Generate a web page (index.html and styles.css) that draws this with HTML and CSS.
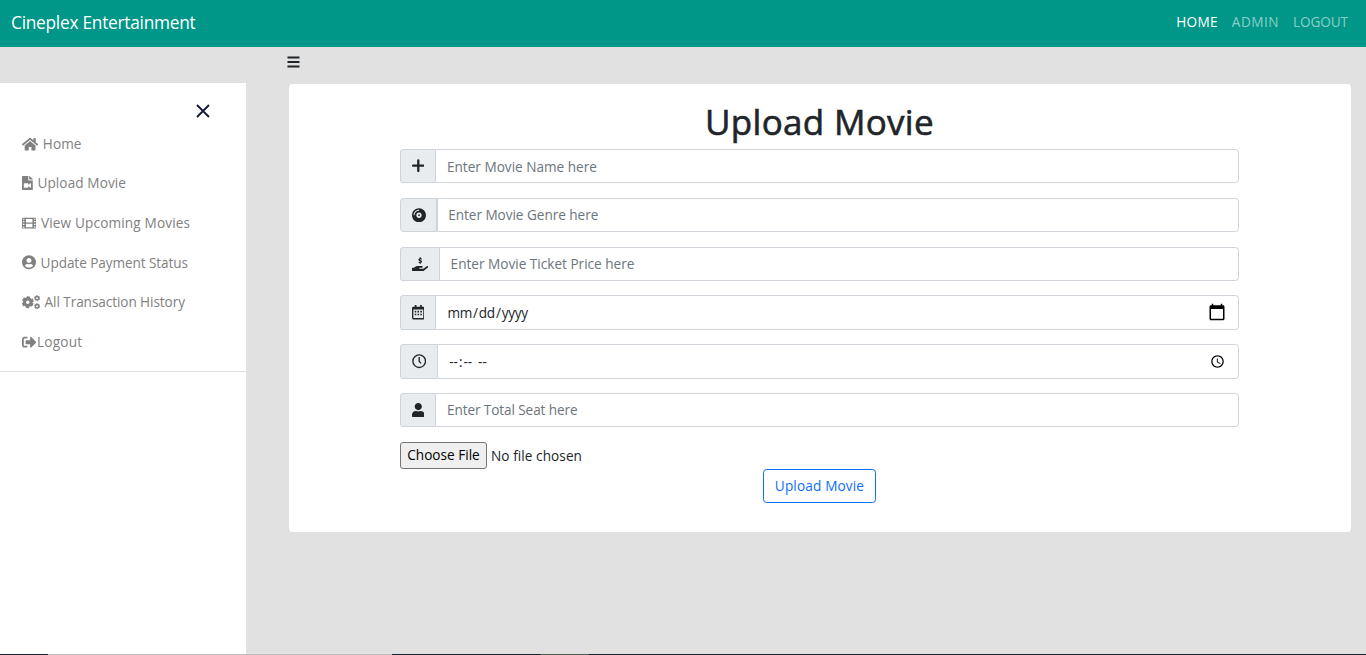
FILE: index.html
```html
<!DOCTYPE html>
<html lang="en">
<head>
<meta charset="utf-8">
<title>Cineplex Entertainment</title>
<link rel="stylesheet" href="styles.css">
</head>
<body>
<nav class="navbar">
  <a class="brand">Cineplex Entertainment</a>
  <div class="nav-links"><a class="active">HOME</a><a class="admin">ADMIN</a><a class="out">LOGOUT</a></div>
</nav>
<div class="layout">
  <aside class="sidebar">
    <div class="close"><svg width="14" height="14" viewBox="0 0 14 14"><path d="M1 1l12 12M13 1L1 13" stroke="#161b35" stroke-width="1.9"/></svg></div>
    <a class="item"><svg width="16.2" height="14.4" viewBox="0 0 576 512"><path d="M280.37 148.26L96 300.11V464a16 16 0 0 0 16 16l112.06-.29a16 16 0 0 0 15.92-16V368a16 16 0 0 1 16-16h64a16 16 0 0 1 16 16v95.64a16 16 0 0 0 16 16.05L464 480a16 16 0 0 0 16-16V300L295.67 148.26a12.19 12.19 0 0 0-15.3 0zM571.6 251.47L488 182.56V44.05a12 12 0 0 0-12-12h-56a12 12 0 0 0-12 12v72.61L318.47 43a48 48 0 0 0-61 0L4.34 251.47a12 12 0 0 0-1.6 16.9l25.5 31A12 12 0 0 0 45.15 301l235.22-193.74a12.19 12.19 0 0 1 15.3 0L530.9 301a12 12 0 0 0 16.9-1.6l25.5-31a12 12 0 0 0-1.7-16.93z"/></svg><span>Home</span></a>
    <a class="item up"><svg width="10.8" height="14.4" viewBox="0 0 384 512"><path d="M384 121.941V128H256V0h6.059c6.365 0 12.47 2.529 16.971 7.029l97.941 97.941A24.005 24.005 0 0 1 384 121.941zM224 136V0H24C10.745 0 0 10.745 0 24v464c0 13.255 10.745 24 24 24h336c13.255 0 24-10.745 24-24V160H248c-13.2 0-24-10.8-24-24zm96 144.016v111.963c0 21.445-25.943 31.998-40.971 16.971L224 353.941V392c0 13.255-10.745 24-24 24H88c-13.255 0-24-10.745-24-24V280c0-13.255 10.745-24 24-24h112c13.255 0 24 10.745 24 24v38.059l55.029-55.013c15.011-15.01 40.971-4.491 40.971 16.97z"/></svg><span>Upload Movie</span></a>
    <a class="item wide"><svg width="14.4" height="14.4" viewBox="0 0 512 512"><path fill-rule="evenodd" d="M24 64h464q24 0 24 24v336q0 24-24 24H24q-24 0-24-24V88q0-24 24-24zM32 96v36h52V96zM32 182v40h52v-40zM32 280v40h52v-40zM32 376v38h52v-38zM428 96v36h52V96zM428 182v40h52v-40zM428 280v40h52v-40zM428 376v38h52v-38zM140 106v126h232V106zM140 278v126h232V278z"/></svg><span>View Upcoming Movies</span></a>
    <a class="item narrow"><svg width="14" height="14.4" viewBox="0 0 496 512"><path d="M248 8C111 8 0 119 0 256s111 248 248 248 248-111 248-248S385 8 248 8zm0 96c48.6 0 88 39.4 88 88s-39.4 88-88 88-88-39.4-88-88 39.4-88 88-88zm0 344c-58.7 0-111.3-26.6-146.5-68.2 18.8-35.4 55.6-59.8 98.5-59.8 2.4 0 4.8.4 7.1 1.1 13 4.2 26.6 6.9 40.9 6.9 14.3 0 28-2.7 40.9-6.9 2.3-.7 4.7-1.1 7.1-1.1 42.9 0 79.7 24.4 98.5 59.8C359.3 421.4 306.7 448 248 448z"/></svg><span>Update Payment Status</span></a>
    <a class="item narrow"><svg width="18" height="14.4" viewBox="0 0 640 512"><g fill="none" stroke="#818181"><circle cx="205" cy="256" r="118" stroke-width="112"/><circle cx="205" cy="256" r="183" stroke-width="60" stroke-dasharray="118 73.64" stroke-dashoffset="-37"/><circle cx="536" cy="112" r="60" stroke-width="54"/><circle cx="536" cy="112" r="91" stroke-width="34" stroke-dasharray="58 37.29"/><circle cx="536" cy="400" r="60" stroke-width="54"/><circle cx="536" cy="400" r="91" stroke-width="34" stroke-dasharray="58 37.29"/></g></svg><span>All Transaction History</span></a>
    <a class="item tight"><svg width="14.4" height="14.4" viewBox="0 0 512 512"><path d="M497 273L329 441c-15 15-41 4.5-41-17v-96H152c-13.3 0-24-10.7-24-24v-96c0-13.3 10.7-24 24-24h136V88c0-21.4 25.9-32 41-17l168 168c9.3 9.4 9.3 24.6 0 34zM192 436v-40c0-6.6-5.4-12-12-12H96c-17.7 0-32-14.3-32-32V160c0-17.7 14.3-32 32-32h84c6.6 0 12-5.4 12-12V76c0-6.6-5.4-12-12-12H96c-53 0-96 43-96 96v192c0 53 43 96 96 96h84c6.6 0 12-5.4 12-12z"/></svg><span>Logout</span></a>
    <div class="divider"></div>
  </aside>
  <main class="main">
    <div class="toggle"><svg width="13" height="12" viewBox="0 0 13 12"><path d="M.5 1.500h12M.5 6h12M.5 10.500h12" stroke="#212529" stroke-width="1.8"/></svg></div>
    <form class="card">
      <h1>Upload Movie</h1>
      <div class="group"><span class="addon"><svg width="12.6" height="14.4" viewBox="0 0 12.6 14.4"><path d="M6.3 1.400v10.600M1 6.700h10.600" stroke="#212529" stroke-width="2.3" stroke-linecap="round"/></svg></span><input type="text" placeholder="Enter Movie Name here"></div>
      <div class="group genre"><span class="addon double"><svg width="14" height="14.4" viewBox="0 0 496 512"><path d="M248 8C111 8 0 119 0 256s111 248 248 248 248-111 248-248S385 8 248 8zM88 256H56c0-105.900 86.100-192 192-192v32c-88.200 0-160 71.800-160 160zm160 96c-53 0-96-43-96-96s43-96 96-96 96 43 96 96-43 96-96 96zm0-128c-17.700 0-32 14.300-32 32s14.300 32 32 32 32-14.300 32-32-14.300-32-32-32z" fill-rule="evenodd"/></svg></span><input type="text" placeholder="Enter Movie Genre here"></div>
      <div class="group"><span class="addon"><svg width="16.2" height="14.4" viewBox="0 0 576 512"><path d="M565.300 328.100c-11.800-10.700-30.200-10-42.600 0L430.300 402c-11.300 9.100-25.400 14-40 14H272c-8.800 0-16-7.200-16-16s7.200-16 16-16h78.300c15.900 0 30.700-10.900 33.300-26.600 3.300-20-12.100-37.400-31.600-37.400H192c-27 0-53.100 9.300-74.100 26.300L71.400 384H16c-8.800 0-16 7.200-16 16v96c0 8.800 7.200 16 16 16h356.800c14.500 0 28.600-4.900 40-14L564 377c15.200-12.100 16.400-35.300 1.300-48.900z"/><path d="M345 76C322 62 250 54 250 94c0 40 88 24 88 68 0 38-72 34-98 14M292 12v44M292 196v42" fill="none" stroke="#212529" stroke-width="46"/></svg></span><input type="text" placeholder="Enter Movie Ticket Price here"></div>
      <div class="group"><span class="addon"><svg width="12.6" height="14.4" viewBox="0 0 448 512"><path fill-rule="evenodd" d="M400 64h-48V12q0-12-12-12h-40q-12 0-12 12v52H160V12q0-12-12-12h-40q-12 0-12 12v52H48Q0 64 0 112v352q0 48 48 48h352q48 0 48-48V112q0-48-48-48zM48 160h352v298q0 6-6 6H54q-6 0-6-6z"/><path d="M96 208h56v56H96zM196 208h56v56h-56zM296 208h56v56h-56zM96 312h56v56H96zM196 312h56v56h-56zM296 312h56v56h-56z"/></svg></span><input type="date"></div>
      <div class="group"><span class="addon"><svg width="14.4" height="14.4" viewBox="0 0 512 512"><g fill="none" stroke="#212529"><circle cx="256" cy="256" r="224" stroke-width="48"/><path d="M256 110v158l68 58" stroke-width="48"/></g></svg></span><input type="time"></div>
      <div class="group seat"><span class="addon"><svg width="12.6" height="14.4" viewBox="0 0 448 512"><path d="M224 256c70.700 0 128-57.300 128-128S294.700 0 224 0 96 57.300 96 128s57.300 128 128 128zm89.600 32h-16.700c-22.200 10.200-46.900 16-72.900 16s-50.600-5.800-72.900-16h-16.700C60.200 288 0 348.200 0 422.400V464c0 26.500 21.500 48 48 48h352c26.500 0 48-21.500 48-48v-41.600c0-74.200-60.200-134.400-134.400-134.400z"/></svg></span><input type="text" placeholder="Enter Total Seat here"></div>
      <input class="file" type="file">
      <button class="submit" type="button">Upload Movie</button>
    </form>
  </main>
</div>
<div class="edge"></div>
</body>
</html>
```
FILE: styles.css
```css
* { box-sizing: border-box; }
body { margin: 0; height: 655px; overflow: hidden; background: #e1e1e1; color: #212529; font: 13.6px/21.6px "Segoe UI", "Open Sans", sans-serif; }
.navbar { height: 47px; background: #009688; display: flex; justify-content: space-between; padding: 0 18px 0 11px; color: #fff; }
.brand { font-size: 17.3px; line-height: 46px; letter-spacing: -.25px; }
.nav-links { display: flex; gap: 14px; line-height: 44px; }
.nav-links a { color: rgba(255,255,255,.55); letter-spacing: -.1px; }
.nav-links .active { color: #fff; letter-spacing: .3px; }
.nav-links .admin { letter-spacing: .5px; }
.layout { display: flex; height: 608px; }
.sidebar { width: 246px; margin-top: 36px; background: #fff; flex: none; }
.close { height: 41px; padding: 20.5px 0 0 196px; line-height: 0; }
.item { display: flex; align-items: center; gap: 4.6px; height: 39.6px; padding-left: 22px; color: #818181; letter-spacing: .1px; }
.item svg { fill: #818181; flex: none; }
.item.up { padding-bottom: 1px; }
.item.wide { letter-spacing: .15px; }
.item.narrow { letter-spacing: -.08px; }
.item.tight { gap: .7px; letter-spacing: .2px; }
.divider { border-top: 1px solid #dedede; margin-top: 9px; }
.main { flex: 1; padding: 0 15px 0 43px; }
.toggle { height: 37px; padding: 9px 0 0; line-height: 0; margin-left: -2px; }
.card { height: 448px; background: #fff; border-radius: 3px; padding: 16px 112px 0 111px; display: flex; flex-direction: column; }
h1 { margin: 0 0 6px; height: 43px; text-align: center; font-weight: 500; font-size: 35px; line-height: 43px; letter-spacing: .3px; -webkit-text-stroke: .6px #212529; }
.group { display: flex; height: 34.4px; margin-bottom: 14.4px; flex: none; }
.addon { display: flex; align-items: center; padding: 0 10.8px; border: 1px solid #ced4da; border-right: 0; background: #e9ecef; border-radius: 3.6px 0 0 3.6px; }
.addon.double { border-right: 1px solid #ced4da; padding-right: 10px; }
.addon svg { fill: #212529; }
.group input { flex: 1; min-width: 0; border: 1px solid #ced4da; border-radius: 0 3.6px 3.6px 0; padding: 1px 10.8px 0; background: #fff; color: #212529; font: inherit; letter-spacing: 0; outline: 0; }
.group input::placeholder { color: #6c757d; opacity: 1; }
.group.genre input { letter-spacing: -.04px; padding: 0 10.4px; }
.group.seat input { letter-spacing: -.1px; padding-top: 0; }
.group input[type="date"] { letter-spacing: -.25px; padding-left: 10.2px; }
.group input[type="time"] { padding-left: 10.2px; }
input[type="time"]::-webkit-datetime-edit-minute-field { margin-right: 2px; }
input[type="time"]::-webkit-datetime-edit-hour-field,
input[type="time"]::-webkit-datetime-edit-minute-field,
input[type="time"]::-webkit-datetime-edit-ampm-field { letter-spacing: 1px; }
input[type="date"]::-webkit-calendar-picker-indicator { width: 18px; height: 18px; padding: 0; background-size: 18px 18px; margin-right: 1px; margin-top: -2px; }
input[type="time"]::-webkit-calendar-picker-indicator { width: 15px; height: 15px; padding: 0; background-size: 15px 15px; margin-right: 2px; margin-top: -1px; }
.file { font: inherit; height: 27px; flex: none; width: 300px; letter-spacing: .07px; }
.file::file-selector-button { font: inherit; width: 87px; height: 27px; padding: 0; color: #000; border: 1px solid #767676; border-radius: 3px; background: #efefef; margin-right: 4px; }
.submit { align-self: center; width: 113px; height: 34px; flex: none; border: 1px solid #0d6efd; border-radius: 3.6px; background: #fff; color: #0d6efd; font: inherit; letter-spacing: .15px; padding: 0; }
.edge { position: fixed; left: 0; right: 0; bottom: 0; height: 1px; background: linear-gradient(90deg, #1c1f29 48px, #bdbdbd 48px 392px, #1b252d 392px 541px, #4b5b52 541px 589px, #1b252d 589px); }
```
